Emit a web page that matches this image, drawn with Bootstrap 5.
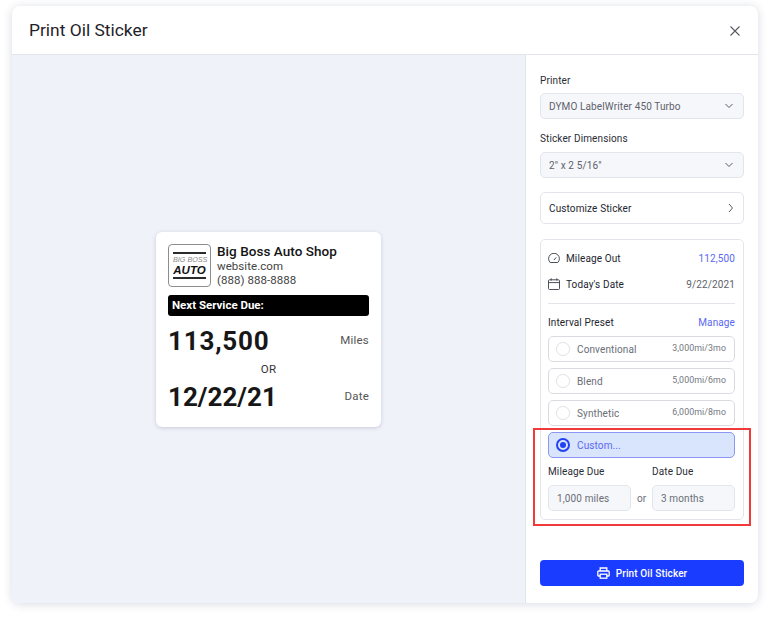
<!DOCTYPE html>
<html lang="en"><head><meta charset="utf-8"><title>Print Oil Sticker</title>
<link href="https://cdn.jsdelivr.net/npm/bootstrap@5.3.0/dist/css/bootstrap.min.css" rel="stylesheet">
<style>
html,body{height:100%;}
body{background:#fff;font-family:Roboto,"Liberation Sans",sans-serif;color:#23262f;padding:6px 12px 18px;}
.sheet{height:597px;border-radius:8px;background:#fff;box-shadow:0 1px 10px rgba(40,50,90,.18);overflow:hidden;}
.sheet-head{height:49px;padding:1px 17px 0 17px;border-bottom:1px solid #e3e5ea;flex:none;}
.sheet-title{font-size:17.4px;font-weight:400;letter-spacing:0;margin:0;color:#1f2229;}
.canvas{background:#f0f2fa;}
.side{width:233px;border-left:1px solid #e3e5ea;padding:18px 14px 17px 14px;}
.flabel{font-size:10px;letter-spacing:.12px;color:#2a2d35;line-height:16px;margin-bottom:4px;}
.flabel-next{margin-top:12px;margin-bottom:5px;line-height:16px;}
.fake-select{height:26px;border:1px solid #e3e5ec;border-radius:5px;background:#f6f7fb;font-size:10px;letter-spacing:.12px;color:#5d6169;padding:0 9px 0 8px;}
.nav-box{height:32px;border:1px solid #e3e5ec;border-radius:5px;font-size:10px;letter-spacing:.12px;color:#23262f;padding:0 9px 0 8px;margin-top:14px;}
.panel{height:281px;margin-top:15px;border:1px solid #e3e5ec;border-radius:5px;padding:5px 8px 0 7px;}
.info-row{font-size:10px;letter-spacing:.12px;height:26px;}
.info-row-short{height:14px;line-height:14px;}
.ico-gap{gap:6px;}
.acc{color:#5a68f0;}
.dim{color:#5d6169;}
.rule{border-top:1px solid #e3e5ea;margin:6px 0 12px;}
.opt{height:26px;border:1px solid #d9dbe1;border-radius:5px;margin-top:6px;padding:0 8px 0 7px;font-size:10px;letter-spacing:.12px;color:#6a6e76;}
.opt-sel{background:#d9e4fd;border-color:#8b97f2;color:#5a68f0;}
.dot{width:14px;height:14px;border-radius:50%;border:1px solid #dfe1e6;margin-right:7px;flex:none;background:#fff;}
.dot-sel{border:2px solid #2341f5;background:#d9e4fd;padding:2px;}
.dot-sel i{display:block;width:6px;height:6px;border-radius:50%;background:#2341f5;}
.rate{font-size:8.8px;letter-spacing:.1px;color:#73777f;}
.due-input{height:26px;border:1px solid #e3e5ec;border-radius:5px;background:#f6f7fb;font-size:10px;letter-spacing:.12px;color:#6a6e76;padding:0 8px;width:83px;}
.or-txt{font-size:10px;color:#6a6e76;width:21px;text-align:center;}
.due-lbl{font-size:10px;letter-spacing:.12px;line-height:14px;margin:7px 0 6px;color:#2a2d35;}
.due-lbl span{display:block;width:83px;}
.print-btn{height:26px;width:204px;background:#1a3cff;border:0;border-radius:4px;color:#fff;font-size:10px;font-weight:500;letter-spacing:.12px;}
.print-btn:hover{background:#1a3cff;color:#fff;}
.btn-gap{gap:6px;}
.sticker{width:225px;height:195px;background:#fff;border-radius:6px;box-shadow:0 1px 4px rgba(40,50,90,.2);padding:12px 12px 0 12px;}
.logo-box{width:43px;height:43px;border:1px solid #8d8d8d;border-radius:4px;padding:0 4px;flex:none;text-align:center;}
.logo-line{height:2px;background:#2b2b2b;}
.logo-top{font-family:"Liberation Sans",sans-serif;font-style:italic;font-size:7.2px;line-height:8px;color:#8a8a8a;margin-top:2px;white-space:nowrap;}
.logo-main{font-family:"Liberation Sans",sans-serif;font-style:italic;font-weight:700;font-size:11.5px;line-height:12px;color:#111;margin-bottom:1px;}
.shop-gap{gap:6px;}
.shop-name{font-size:13.5px;font-weight:500;line-height:14px;letter-spacing:.05px;color:#141414;margin-bottom:1px;}
.shop-line{font-size:11.5px;line-height:14px;letter-spacing:.05px;color:#444;}
.due-bar{height:21px;background:#000;border-radius:3px;color:#fff;font-size:11.5px;font-weight:700;line-height:21px;padding-left:4px;margin-top:8px;}
.big-num{font-size:26px;font-weight:700;letter-spacing:.8px;line-height:32px;color:#171717;}
.big-date{letter-spacing:0;}
.unit{font-size:11.5px;letter-spacing:.2px;color:#555;}
.or-mid{font-size:11.5px;color:#333;text-align:center;line-height:14px;letter-spacing:.2px;margin:5px 0;}
.num-row{margin-top:9px;}
.mark-box{position:absolute;left:533px;top:428px;width:218px;height:98px;border:2px solid #f23a3a;pointer-events:none;}
</style></head>
<body>
<div class="sheet d-flex flex-column">
  <div class="sheet-head d-flex align-items-center justify-content-between">
    <h1 class="sheet-title">Print Oil Sticker</h1>
    <svg width="12" height="12" viewBox="0 0 12 12" fill="none" stroke="#555a63" stroke-width="1.1" aria-label="Close"><path d="M1.5 1.5l9 9M10.5 1.5l-9 9"/></svg>
  </div>
  <div class="d-flex flex-grow-1">
    <div class="canvas flex-grow-1 d-flex align-items-center justify-content-center">
      <div class="sticker">
        <div class="d-flex shop-gap">
          <div class="logo-box d-flex flex-column justify-content-center">
            <div class="logo-line"></div>
            <div class="logo-top">BIG BOSS</div>
            <div class="logo-main">AUTO</div>
            <div class="logo-line"></div>
          </div>
          <div>
            <div class="shop-name">Big Boss Auto Shop</div>
            <div class="shop-line">website.com</div>
            <div class="shop-line">(888) 888-8888</div>
          </div>
        </div>
        <div class="due-bar">Next Service Due:</div>
        <div class="d-flex justify-content-between align-items-center num-row"><span class="big-num">113,500</span><span class="unit">Miles</span></div>
        <div class="or-mid">OR</div>
        <div class="d-flex justify-content-between align-items-center"><span class="big-num big-date">12/22/21</span><span class="unit">Date</span></div>
      </div>
    </div>
    <div class="side d-flex flex-column">
      <div class="flabel">Printer</div>
      <div class="fake-select d-flex align-items-center justify-content-between">DYMO LabelWriter 450 Turbo
        <svg width="10" height="6" viewBox="0 0 10 6" fill="none" stroke="#555a63" stroke-width="1"><path d="M1.5 1l3.5 3.5L8.5 1"/></svg></div>
      <div class="flabel flabel-next">Sticker Dimensions</div>
      <div class="fake-select d-flex align-items-center justify-content-between">2" x 2 5/16"
        <svg width="10" height="6" viewBox="0 0 10 6" fill="none" stroke="#555a63" stroke-width="1"><path d="M1.5 1l3.5 3.5L8.5 1"/></svg></div>
      <div class="nav-box d-flex align-items-center justify-content-between">Customize Sticker
        <svg width="6" height="10" viewBox="0 0 6 10" fill="none" stroke="#555a63" stroke-width="1"><path d="M1 1l3.5 4L1 9"/></svg></div>
      <div class="panel">
        <div class="info-row d-flex align-items-center justify-content-between">
          <span class="d-flex align-items-center ico-gap">
            <svg width="12" height="11" viewBox="0 0 12 11" fill="none" stroke="#3a3d45" stroke-width=".9"><path d="M2.2 9.5h7.6a5.4 5.4 0 1 0-7.6 0z"/><path d="M6 7l2.2-2.6"/></svg>
            Mileage Out</span><span class="acc">112,500</span></div>
        <div class="info-row d-flex align-items-center justify-content-between">
          <span class="d-flex align-items-center ico-gap">
            <svg width="12" height="12" viewBox="0 0 12 12" fill="none" stroke="#3a3d45" stroke-width=".9"><rect x=".5" y="1.8" width="11" height="9.7" rx="1"/><path d="M.5 4.6h11M3.2.3v2.4M8.8.3v2.4"/></svg>
            Today's Date</span><span class="dim">9/22/2021</span></div>
        <div class="rule"></div>
        <div class="d-flex justify-content-between info-row info-row-short"><span>Interval Preset</span><span class="acc">Manage</span></div>
        <div class="opt d-flex align-items-center"><span class="dot"></span><span class="flex-grow-1">Conventional</span><span class="rate">3,000mi/3mo</span></div>
        <div class="opt d-flex align-items-center"><span class="dot"></span><span class="flex-grow-1">Blend</span><span class="rate">5,000mi/6mo</span></div>
        <div class="opt d-flex align-items-center"><span class="dot"></span><span class="flex-grow-1">Synthetic</span><span class="rate">6,000mi/8mo</span></div>
        <div class="opt opt-sel d-flex align-items-center"><span class="dot dot-sel"><i></i></span><span class="flex-grow-1">Custom...</span></div>
        <div class="due-lbl d-flex"><span>Mileage Due</span><span class="ms-auto">Date Due</span></div>
        <div class="d-flex align-items-center"><div class="due-input d-flex align-items-center">1,000 miles</div><div class="or-txt">or</div><div class="due-input d-flex align-items-center">3 months</div></div>
      </div>
      <button class="btn print-btn mt-auto d-flex align-items-center justify-content-center btn-gap p-0" type="button">
        <svg width="13" height="12" viewBox="0 0 13 12" fill="none" stroke="#fff" stroke-width="1.3"><path d="M3.2 4V1h6.6v3"/><path d="M3 9H1.5A.8.8 0 0 1 .8 8.2V5a1 1 0 0 1 1-1h9.4a1 1 0 0 1 1 1v3.2a.8.8 0 0 1-.7.8H10"/><rect x="3.2" y="7.2" width="6.6" height="4"/></svg>
        Print Oil Sticker</button>
    </div>
  </div>
</div>
<div class="mark-box"></div>
</body></html>
